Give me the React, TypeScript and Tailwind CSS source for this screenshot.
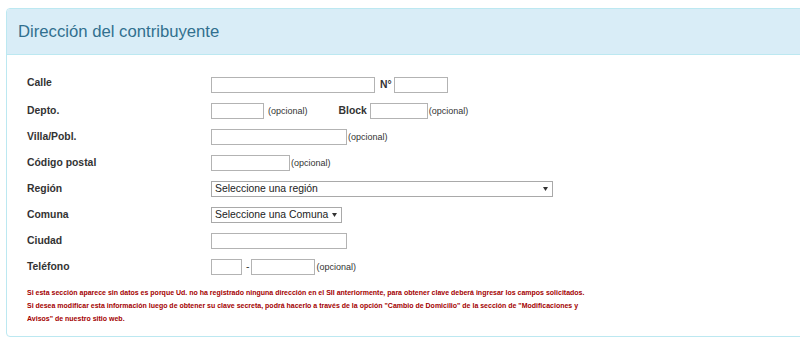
import React from "react";

const Input = ({ w }: { w: string }) => (
  <div className={`${w} h-[16px] border border-[#b3b3b3] bg-white shrink-0`} />
);

const Opc = ({ cls = "" }: { cls?: string }) => (
  <span className={`text-[9px] leading-none text-[#333] whitespace-nowrap ${cls}`}>(opcional)</span>
);

const Select = ({ w, text }: { w: string; text: string }) => (
  <div
    className={`${w} h-[16px] border border-[#a9a9a9] bg-white flex items-center justify-between pl-[3px] pr-[4px] shrink-0`}
  >
    <span className="text-[10.4px] leading-none text-[#222] whitespace-nowrap">{text}</span>
    <svg width="5" height="4" viewBox="0 0 5 4" className="ml-[4px] shrink-0">
      <path d="M0 0H5L2.5 4Z" fill="#333" />
    </svg>
  </div>
);

const Row = ({ label, children, up = false }: { label: string; children: React.ReactNode; up?: boolean }) => (
  <div className="flex items-center h-[16px] mb-[10px]">
    <div
      className={`w-[184px] shrink-0 text-[10.4px] leading-none font-bold text-[#333] ${up ? "mb-[4px]" : ""}`}
    >
      {label}
    </div>
    <div className="flex items-center h-[16px]">{children}</div>
  </div>
);

export default function App() {
  return (
    <div
      className="w-[800px] h-[346px] overflow-hidden bg-white pt-[8px] pl-[6px]"
      style={{ fontFamily: '"Liberation Sans", Arial, sans-serif' }}
    >
      <div className="w-[830px] border border-[#bce8f1] rounded-[4px]">
        <div className="h-[46px] bg-[#d9edf7] border-b border-[#bce8f1] rounded-t-[3px] flex items-center pl-[11px] text-[16.7px] text-[#31708f]">
          Dirección del contribuyente
        </div>
        <div className="pl-[20px] pt-[22px] pb-[11px]">
          <Row label="Calle" up>
            <Input w="w-[164px]" />
            <span className="text-[10.4px] font-bold text-[#333] ml-[5px] mr-[2px] leading-none">N°</span>
            <Input w="w-[54px]" />
          </Row>
          <Row label="Depto.">
            <Input w="w-[53px]" />
            <Opc cls="ml-[4px]" />
            <span className="text-[10.4px] font-bold text-[#333] ml-[31px] mr-[3px] leading-none">Block</span>
            <Input w="w-[58px]" />
            <Opc cls="ml-[1px]" />
          </Row>
          <Row label="Villa/Pobl.">
            <Input w="w-[136px]" />
            <Opc cls="ml-[1px]" />
          </Row>
          <Row label="Código postal">
            <Input w="w-[79px]" />
            <Opc cls="ml-[1px]" />
          </Row>
          <Row label="Región">
            <Select w="w-[342px]" text="Seleccione una región" />
          </Row>
          <Row label="Comuna">
            <Select w="w-[131px]" text="Seleccione una Comuna" />
          </Row>
          <Row label="Ciudad">
            <Input w="w-[136px]" />
          </Row>
          <Row label="Teléfono">
            <Input w="w-[31px]" />
            <span className="text-[10.4px] text-[#333] ml-[4px] mr-[2px] leading-none">-</span>
            <Input w="w-[64px]" />
            <Opc cls="ml-[1px]" />
          </Row>
          <div className="pt-[1px] text-[7px] font-bold leading-[13px] text-[#a30000] whitespace-nowrap">
            <div>
              Si esta sección aparece sin datos es porque Ud. no ha registrado ninguna dirección en el SII anteriormente, para obtener clave deberá ingresar los campos solicitados.
            </div>
            <div>
              Si desea modificar esta información luego de obtener su clave secreta, podrá hacerlo a través de la opción "Cambio de Domicilio" de la sección de "Modificaciones y
              <br />
              Avisos" de nuestro sitio web.
            </div>
          </div>
        </div>
      </div>
    </div>
  );
}
